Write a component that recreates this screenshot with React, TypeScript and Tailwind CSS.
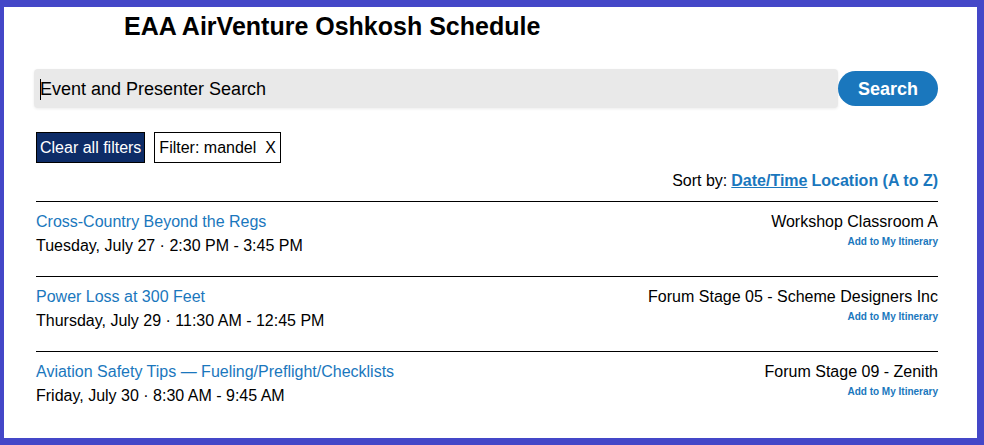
export default function App() {
  const events = [
    {
      title: "Cross-Country Beyond the Regs",
      when: "Tuesday, July 27 · 2:30 PM - 3:45 PM",
      place: "Workshop Classroom A",
    },
    {
      title: "Power Loss at 300 Feet",
      when: "Thursday, July 29 · 11:30 AM - 12:45 PM",
      place: "Forum Stage 05 - Scheme Designers Inc",
    },
    {
      title: "Aviation Safety Tips — Fueling/Preflight/Checklists",
      when: "Friday, July 30 · 8:30 AM - 9:45 AM",
      place: "Forum Stage 09 - Zenith",
    },
  ];

  return (
    <div
      className="w-[984px] h-[445px] overflow-hidden bg-white border-[#4447c8] border-l-4 border-t-[7px] border-r-[7px] border-b-[7px] text-black"
      style={{ fontFamily: '"Liberation Sans", Arial, sans-serif' }}
    >
      <div className="pl-[30px] pr-[39px]">
        {/* Heading */}
        <h1 className="pl-[90px] pt-[5px] text-[25px] font-bold leading-[28px]">
          EAA AirVenture Oshkosh Schedule
        </h1>

        {/* Search */}
        <div className="mt-[29px] flex items-center">
          <div className="flex h-[39px] w-[804px] items-center rounded-[4px] bg-[#e9e9e9] pl-[6px] pt-[2px] text-[18px] shadow-[0_1px_3px_rgba(0,0,0,0.08)]">
            <span className="mr-[-1px] h-[21px] w-px bg-black" />
            <span>Event and Presenter Search</span>
          </div>
          <button className="h-[35px] w-[100px] rounded-full bg-[#1a77bd] pt-px text-[18px] font-bold text-white">
            Search
          </button>
        </div>

        {/* Filters */}
        <div className="mt-[24px] flex items-center gap-[9px] pl-[2px] text-[16px]">
          <span className="flex h-[31px] items-center border border-black bg-[#0d2c67] px-[3px] text-white">
            Clear all filters
          </span>
          <span className="flex h-[31px] items-center border border-black bg-white px-[4px]">
            Filter: mandel&nbsp;&nbsp;X
          </span>
        </div>

        {/* Sort */}
        <div className="mt-[9px] flex justify-end gap-[4px] text-[16px] leading-[18px]">
          <span>Sort by:</span>
          <span className="font-bold text-[#1a77bd] underline">Date/Time</span>
          <span className="font-bold text-[#1a77bd]">Location (A to Z)</span>
        </div>

        {/* Results */}
        <div className="mt-[11px] pl-[2px]">
          {events.map((e) => (
            <div
              key={e.title}
              className="flex h-[75px] justify-between border-t border-black pt-[8px] text-[16px]"
            >
              <div className="leading-[24px]">
                <div className="text-[#1a77bd]">{e.title}</div>
                <div>{e.when}</div>
              </div>
              <div className="flex flex-col items-end">
                <div className="leading-[24px]">{e.place}</div>
                <div className="mt-[2px] text-[10px] font-bold leading-[12px] text-[#1a77bd]">
                  Add to My Itinerary
                </div>
              </div>
            </div>
          ))}
        </div>
      </div>
    </div>
  );
}
